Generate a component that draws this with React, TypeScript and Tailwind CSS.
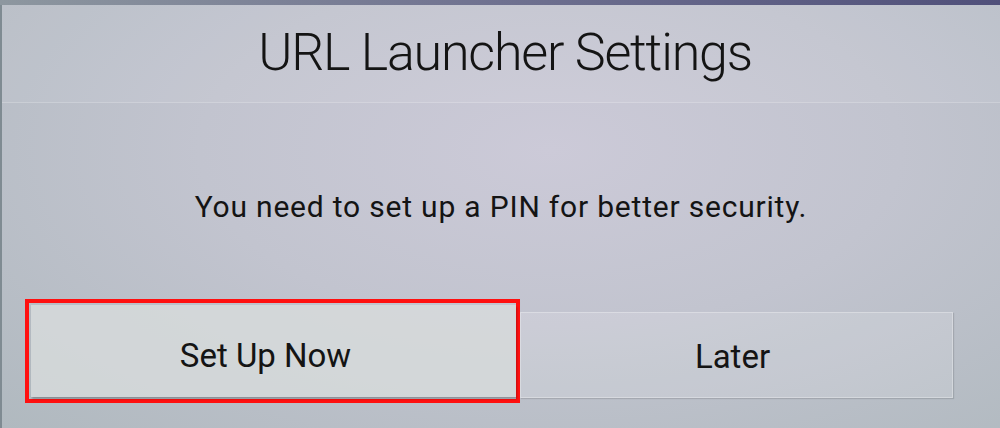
export default function App() {
    return (
        <div className="relative w-[1000px] h-[428px] flex flex-col overflow-hidden bg-[radial-gradient(ellipse_at_55%_35%,#cccad8_0%,#c2c4cf_45%,#b0b9bf_100%)] font-['Roboto',sans-serif] text-[#141414]">
            <div className="h-[5px] bg-gradient-to-r from-[#8d979f] via-[#6f7190] to-[#50507a]" />
            <div className="flex border-l-[2px] border-[#7f8b92] flex-1 flex-col">
                <div className="h-[98px] flex items-center justify-center bg-white/5 border-b border-white/20">
                    <h1 className="text-[52px] font-light tracking-[-1.2px] leading-none pl-[8px] pb-[2px]">URL Launcher Settings</h1>
                </div>

                <div className="h-[196px] flex items-center justify-center pt-[12px]">
                    <p className="text-[30px] tracking-[0.8px] leading-none">You need to set up a PIN for better security.</p>
                </div>

                <div className="flex items-center pl-[23px]">
                    <div className="w-[495px] h-[104px] border-[4px] border-[#ff1010] p-[2px] pr-0">
                        <button className="w-full h-full flex items-center justify-center bg-[#d8dcdc]/80 shadow-[1px_2px_2px_rgba(0,0,0,0.25)] text-[33px] tracking-[0px]">
                            <span className="-ml-[16px] mt-[10px]">Set Up Now</span>
                        </button>
                    </div>
                    <button className="w-[433px] h-[86px] mt-[8px] flex items-center justify-center bg-white/15 border border-white/30 shadow-[1px_1px_1px_rgba(0,0,0,0.12)] text-[33px] tracking-[0px]">
                        <span className="-ml-[8px] mt-[4px]">Later</span>
                    </button>
                </div>
            </div>
        </div>
    );
}
